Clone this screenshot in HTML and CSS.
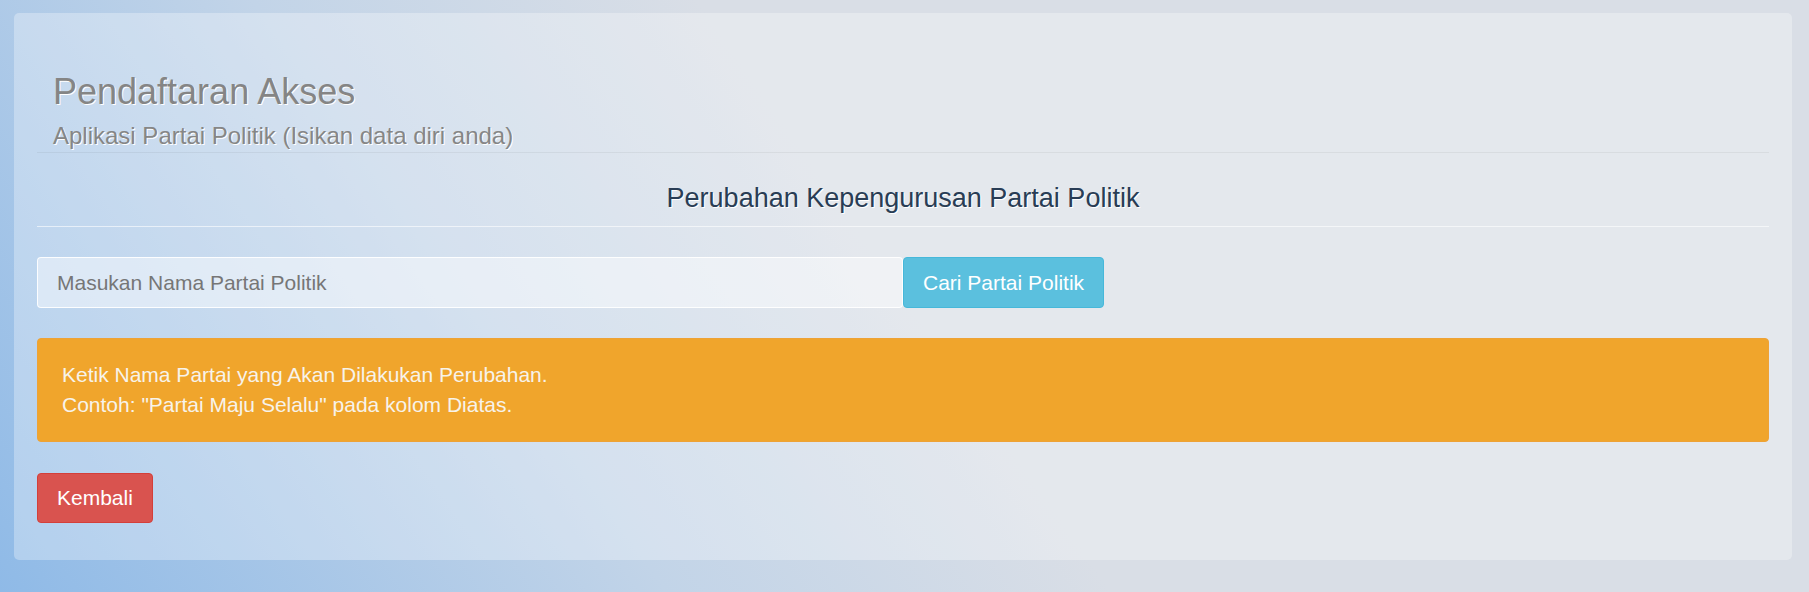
FILE: index.html
```html
<!DOCTYPE html>
<html lang="id">
<head>
  <meta charset="UTF-8">
  <title>Pendaftaran Akses</title>
  <link rel="stylesheet" href="styles.css">
</head>
<body>

  <div class="panel">
    <div class="page-header">
      <h1>Pendaftaran Akses <small>Aplikasi Partai Politik (Isikan data diri anda)</small></h1>
    </div>

    <h3 class="section-title">Perubahan Kepengurusan Partai Politik</h3>
    <hr>

    <div class="search-group">
      <input type="text" id="partai" placeholder="Masukan Nama Partai Politik">
      <button class="btn btn-info">Cari Partai Politik</button>
    </div>

    <div class="alert">
      Ketik Nama Partai yang Akan Dilakukan Perubahan.<br>
      Contoh: "Partai Maju Selalu" pada kolom Diatas.
    </div>

    <button class="btn btn-danger">Kembali</button>
  </div>

</body>
</html>
```

FILE: styles.css
```css
* {
  box-sizing: border-box;
}

html, body {
  height: 100%;
}

body {
  margin: 0;
  padding: 13px 17px 31px 14px;
  font-family: 'Liberation Sans', Arial, sans-serif;
  font-size: 21px;
  line-height: 1.42857;
  color: #333;
  background: linear-gradient(55deg, #8fbae7 0%, #c2d4e8 30%, #d9dee6 50%, #d9dee6 100%);
}

.panel {
  background: rgba(255, 255, 255, 0.3);
  border-radius: 5px;
  padding: 0 23px 37px;
}

.page-header {
  padding: 59px 0 4px 16px;
  border-bottom: 1px solid rgba(0, 0, 0, 0.05);
}

h1 {
  margin: 0;
  font-size: 36px;
  font-weight: normal;
  line-height: 1.1;
  color: #858585;
  text-shadow: 1px 1px 0 #fff;
}

h1 small {
  display: block;
  margin-top: 12px;
  font-size: 24px;
  line-height: 1;
  color: #868686;
}

.section-title {
  margin: 31px 0 13px;
  font-size: 27px;
  font-weight: normal;
  line-height: 1.1;
  text-align: center;
  color: #293d55;
  text-shadow: 1px 1px 0 #fff;
}

hr {
  margin: 0;
  border: 0;
  border-top: 1px solid rgba(255, 255, 255, 0.6);
}

.search-group {
  display: flex;
  margin-top: 30px;
}

.search-group input {
  width: 50%;
  height: 51px;
  padding: 10px 19px;
  font-family: inherit;
  font-size: 21px;
  color: #555;
  background: rgba(255, 255, 255, 0.45);
  border: 1px solid rgba(255, 255, 255, 0.9);
  border-radius: 4px;
  outline: none;
}

.search-group input::placeholder {
  color: #767676;
}

.btn {
  height: 51px;
  padding: 0 19px;
  font-family: inherit;
  font-size: 21px;
  color: #fff;
  border: 1px solid transparent;
  border-radius: 4px;
  cursor: pointer;
}

.btn-info {
  background: #5bc0de;
  border-color: #46b8da;
}

.btn-danger {
  height: 50px;
  margin-top: 31px;
  background: #d9534f;
  border-color: #d43f3a;
}

.alert {
  margin-top: 30px;
  padding: 21px 24px;
  color: #f7f3ea;
  background: #f0a52c;
  border: 1px solid #eea236;
  border-radius: 4px;
}
```
